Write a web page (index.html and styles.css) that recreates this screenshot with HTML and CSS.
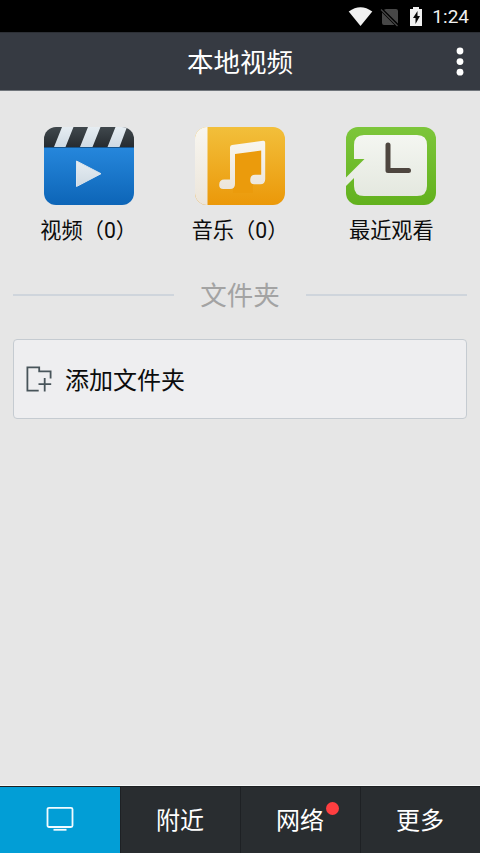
FILE: index.html
```
<!DOCTYPE html>
<html lang="zh-CN">
<head>
<meta charset="utf-8">
<title>本地视频</title>
<link rel="stylesheet" href="styles.css">
</head>
<body>
<div class="screen">
  <div class="status">
    <svg class="status-icons" width="78" height="24" viewBox="0 0 78 24">
      <path d="M.7 6.500Q12.500-2 24.300 6.500L12.500 21z" fill="#f0f0f0"/>
      <path d="M38 4h10q2 0 2 2v12.500L36 4.800zM34 7.500 46.500 20H36q-2 0-2-2z" fill="#474747"/>
      <path d="M33 4.500 49.500 21" stroke="#474747" stroke-width="1.300"/>
      <path d="M62 4h3V2h6v2h3v17H62z" fill="#f0f0f0"/>
      <path d="M69.500 6 65 13h2.500v6l4.500-8h-2.500z" fill="#050505"/>
    </svg>
    <span class="time">1:24</span>
  </div>
  <header class="header">
    <h1 class="title">本地视频</h1>
    <svg class="menu" width="8" height="30" viewBox="0 0 8 30" fill="#fff"><circle cx="4" cy="4" r="3.400"/><circle cx="4" cy="14.600" r="3.400"/><circle cx="4" cy="25.200" r="3.400"/></svg>
  </header>
  <main class="content">
    <div class="shortcuts">
      <div class="shortcut">
        <svg width="90" height="78" viewBox="0 0 90 78">
          <defs>
            <linearGradient id="blue" x2="0" y2="1"><stop stop-color="#2687dc"/><stop offset="1" stop-color="#0d65b7"/></linearGradient>
            <linearGradient id="dark" x2="0" y2="1"><stop stop-color="#40484d"/><stop offset="1" stop-color="#262b30"/></linearGradient>
            <linearGradient id="pale" x2="0" y2="1"><stop stop-color="#e6edf2"/><stop offset="1" stop-color="#cfdae3"/></linearGradient>
            <clipPath id="card"><rect width="90" height="78" rx="12"/></clipPath>
          </defs>
          <g clip-path="url(#card)">
            <path d="M0 20h90v58H0z" fill="url(#blue)"/>
            <path d="M0 0h90v20H0z" fill="url(#dark)"/>
            <path d="M18 0h11.500L21.500 20H10zM44 0h12.500l-8 20H36zM71.500 0H83l-7.500 20H63.500z" fill="url(#pale)"/>
            <path d="M0 20.500h90" stroke="#16558e"/>
            <path d="M32.500 34v25.500L57 46.700z" fill="url(#pale)" stroke="#dce5ed" stroke-linejoin="round"/>
          </g>
        </svg>
        <span class="label">视频（0）</span>
      </div>
      <div class="shortcut">
        <svg width="90" height="78" viewBox="0 0 90 78">
          <defs>
            <linearGradient id="gold" x2="0" y2="1"><stop stop-color="#f2bf3b"/><stop offset="1" stop-color="#eb9809"/></linearGradient>
            <linearGradient id="cream" x2="0" y2="1"><stop stop-color="#f8f6f0"/><stop offset="1" stop-color="#ece5da"/></linearGradient>
          </defs>
          <g clip-path="url(#card)">
            <path d="M0 0h90v78H0z" fill="url(#gold)"/>
            <path d="M0 0h12.500v78H0z" fill="url(#cream)"/>
            <path d="M38 26 68 22v28H58v16H38z" fill="#eb9b0c"/>
            <path d="M35 20.500q0-2 2-2.400l31-4.300q2.200-.3 2.200 2v36.500q0 5-5 5h-6q-4 0-4-4.300 0-5.300 5-5.300h6V23.500l-26.200 3.600V57q0 5-5 5h-6.800q-4 0-4-4 0-5.500 5-5.500h5.800z" fill="url(#cream)"/>
          </g>
        </svg>
        <span class="label">音乐（0）</span>
      </div>
      <div class="shortcut">
        <svg width="90" height="78" viewBox="0 0 90 78">
          <defs>
            <linearGradient id="green" x2="0" y2="1"><stop stop-color="#7dc63b"/><stop offset="1" stop-color="#62b11d"/></linearGradient>
            <linearGradient id="face" x2="0" y2="1"><stop stop-color="#f4f6f1"/><stop offset="1" stop-color="#e4e8df"/></linearGradient>
          </defs>
          <g clip-path="url(#card)">
            <path d="M0 0h90v78H0z" fill="url(#green)"/>
            <path d="M18 8h53q10 0 10 10v41q0 10-10 10H18Q8 69 8 59v-8L0 59v-8.500L18.500 32H8V18Q8 8 18 8z" fill="url(#face)"/>
            <path d="M42 18v25.500h20.500" fill="none" stroke="#4e463f" stroke-width="5" stroke-linecap="round" stroke-linejoin="round"/>
          </g>
        </svg>
        <span class="label">最近观看</span>
      </div>
    </div>
    <div class="divider"><h2 class="divider-title">文件夹</h2></div>
    <div class="add">
      <svg width="28" height="28" viewBox="0 0 28 28" fill="none" stroke="#48545a" stroke-width="1.800"><path d="M12.700 24.600H1.400V1.400h11.800v4h11.400v7M12.500 18.200h12.700M18.700 12v13.500"/></svg>
      <span class="add-label">添加文件夹</span>
    </div>
  </main>
  <nav class="tabs">
    <div class="tab active"><svg width="28" height="26" viewBox="0 0 28 26" fill="none" stroke="#f1fbff" stroke-width="1.800"><rect x="1.500" y="1.800" width="25" height="19.200" rx="1.500"/><path d="M7.500 23.800h13"/></svg></div>
    <div class="tab">附近</div>
    <div class="tab">网络<span class="badge"></span></div>
    <div class="tab">更多</div>
  </nav>
</div>
</body>
</html>
```
FILE: styles.css
```
* { box-sizing: border-box; }
body { margin: 0; background: #e6e6e6; font-family: Roboto, "Noto Sans CJK SC", sans-serif; font-weight: 400; }
svg { display: block; flex: none; }
h1, h2 { margin: 0; font-weight: inherit; }
.screen { width: 480px; height: 853px; display: flex; flex-direction: column; }
.status { height: 32px; background: #000; color: #f0f0f0; display: flex; justify-content: flex-end; align-items: center; gap: 6px; padding-right: 11px; }
.status-icons { margin-top: 1px; }
.time { font-size: 19px; line-height: 32px; padding-top: 1px; }
.header { height: 59px; background: #363a42; border-top: 1px solid #2c2f35; border-bottom: 1px solid #70757b; display: grid; grid-template-columns: 1fr auto 1fr; align-items: center; }
.title { grid-column: 2; color: #fff; font-size: 26.500px; line-height: 55px; padding-top: 2px; }
.menu { justify-self: end; margin-right: 16px; }
.content { flex: 1; padding: 36px 13px 0; }
.shortcuts { display: grid; grid-template-columns: repeat(3, 1fr); }
.shortcut { display: flex; flex-direction: column; align-items: center; }
.label { font-size: 21.200px; line-height: 30px; margin-top: 11px; color: #0c0c0c; white-space: nowrap; }
.divider { height: 40px; margin-top: 29px; display: flex; align-items: center; justify-content: space-between; }
.divider::before, .divider::after { content: ""; width: 161px; height: 2px; background: #cfd5dc; }
.divider-title { color: #a3a3a3; font-size: 26.500px; line-height: 38px; padding-top: 2px; }
.add { height: 80px; margin-top: 24px; padding: 2px 0 0 12px; border: 1px solid #c5cbd1; border-radius: 4px; background: #eeeef0; display: flex; align-items: center; gap: 11px; }
.add-label { font-size: 24px; line-height: 36px; color: #0c0c0c; padding-top: 1px; }
.tabs { height: 68px; border-top: 1px solid #f5f7f7; display: grid; grid-template-columns: repeat(4, 1fr); background: #292d30; }
.tab { position: relative; display: flex; align-items: center; justify-content: center; color: #fff; font-size: 24px; border-top: 1px solid #1d2022; box-shadow: inset 1px 0 #1e2124; padding-bottom: 3px; }
.active { background: #029ed6; box-shadow: none; padding-bottom: 2px; }
.badge { position: absolute; left: 86px; top: 15px; width: 13px; height: 13px; border-radius: 50%; background: #ff3e40; }
```
